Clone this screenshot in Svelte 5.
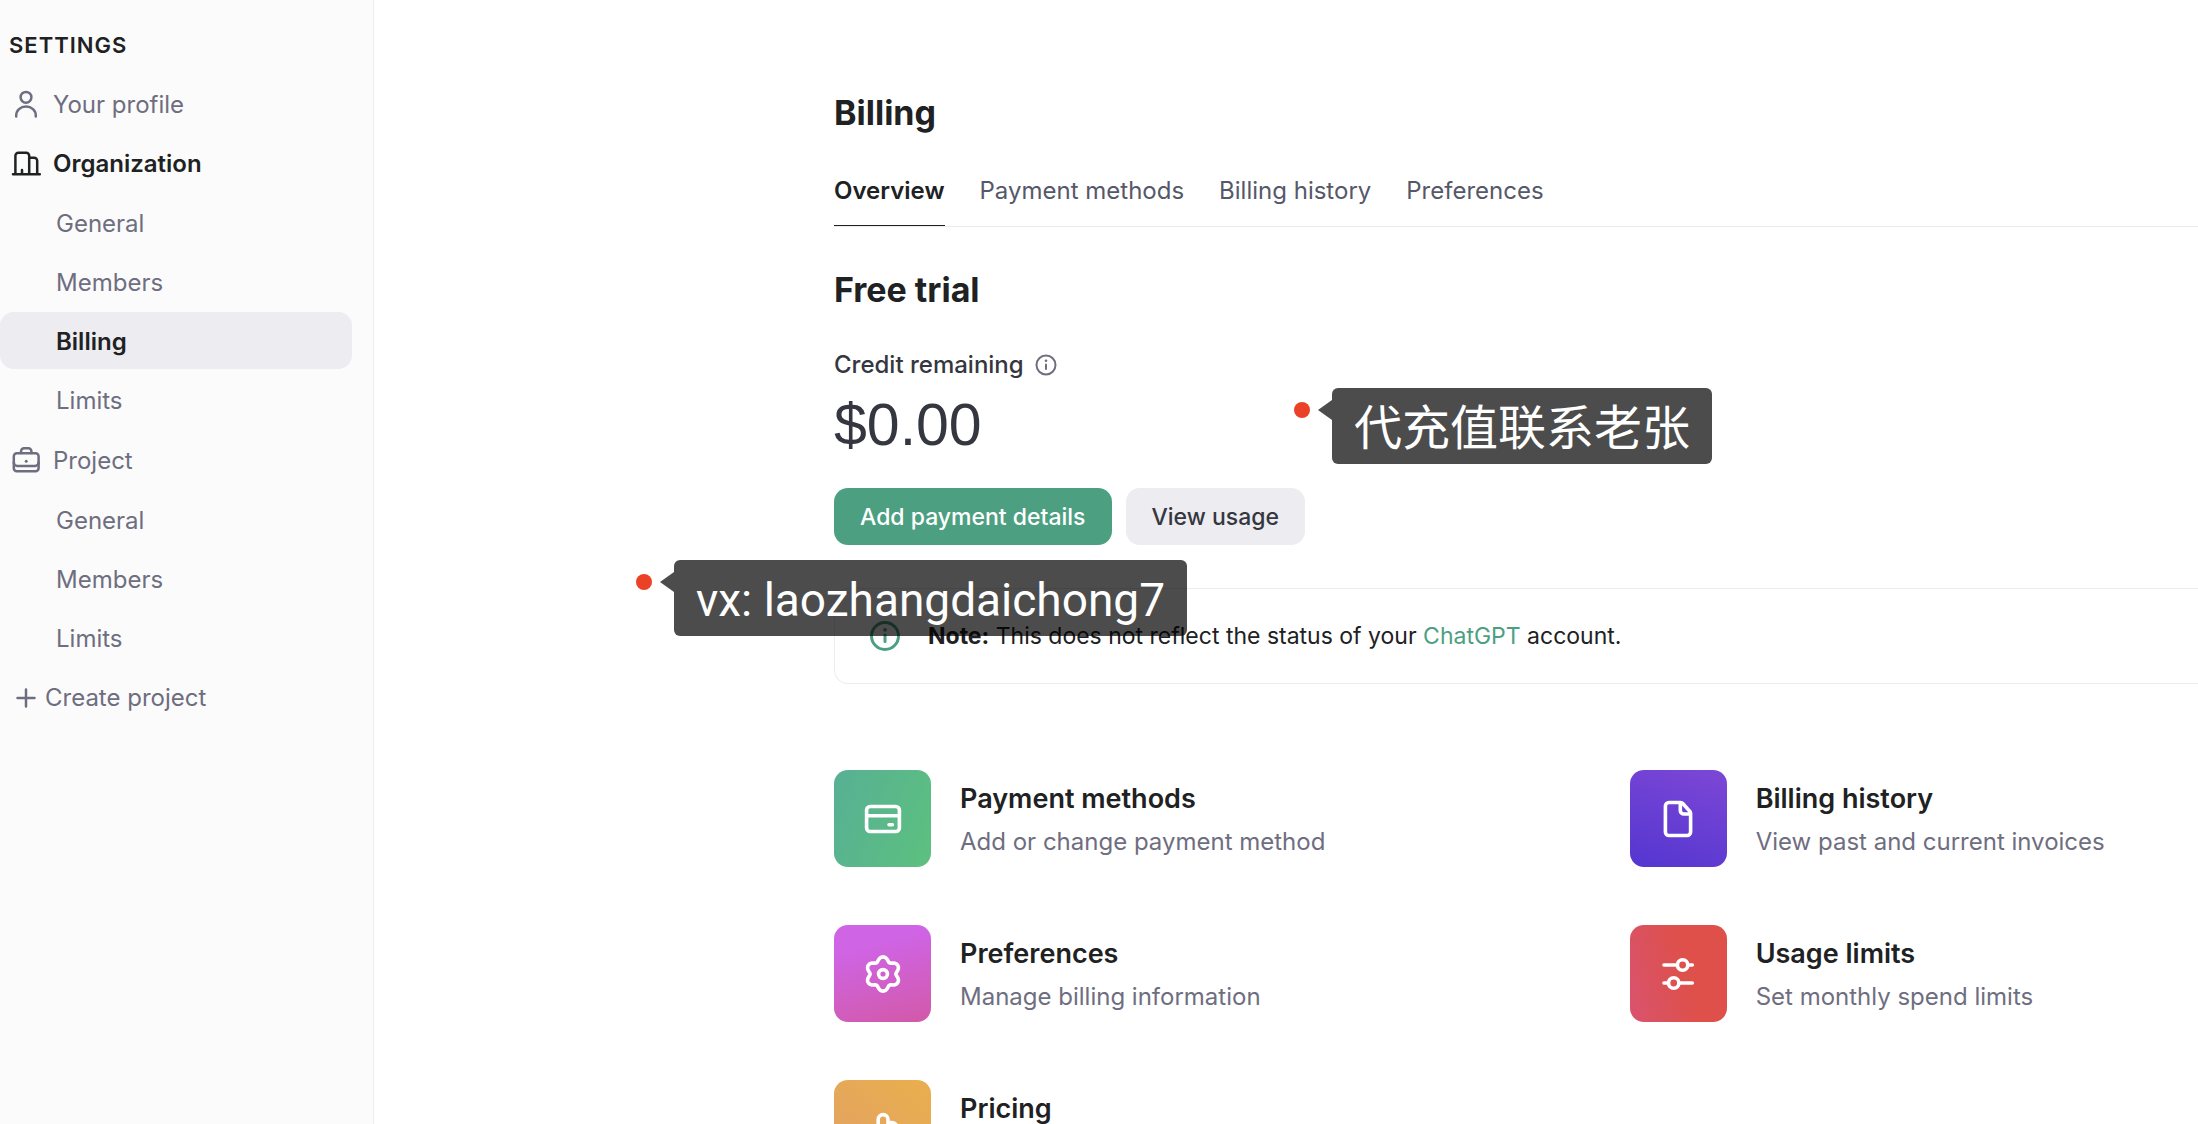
<script>
  const orgLinks = ['General', 'Members', 'Billing', 'Limits'];
  const projectLinks = ['General', 'Members', 'Limits'];
  const tabs = ['Overview', 'Payment methods', 'Billing history', 'Preferences'];
  const cards = [
    { id: 'card', title: 'Payment methods', text: 'Add or change payment method' },
    { id: 'file', title: 'Billing history', text: 'View past and current invoices' },
    { id: 'gear', title: 'Preferences', text: 'Manage billing information' },
    { id: 'sliders', title: 'Usage limits', text: 'Set monthly spend limits' },
    { id: 'hand', title: 'Pricing', text: '' }
  ];

  // Six-lobed gear outline around (24, 24)
  const gear =
    'M' +
    Array.from({ length: 120 }, (_, i) => {
      const a = (i / 120) * Math.PI * 2;
      const r = 15.2 + 2.1 * Math.cos(6 * a) - 0.2 * Math.cos(12 * a);
      return `${(24 + r * Math.sin(a)).toFixed(2)} ${(24 - r * Math.cos(a)).toFixed(2)}`;
    }).join('L') +
    'Z';
</script>

<div class="app">
  <nav class="sidebar" aria-label="Settings">
    <h2>SETTINGS</h2>
    <a class="row" href="#profile">
      <svg class="icon" viewBox="0 0 32 32"><circle cx="16" cy="8.3" r="5.4" /><path d="M6.2 27.4v-.6c0-5.4 4.2-9.2 9.8-9.2s9.8 3.8 9.8 9.2v.6" /></svg>
      Your profile
    </a>
    <a class="row active" href="#organization">
      <svg class="icon" viewBox="0 0 32 32"><path d="M3 26.3h26.800M5.400 26V7.700a3 3 0 0 1 3-3h7.800a3 3 0 0 1 3 3V26M19.200 9.700h5a3 3 0 0 1 3 3V26M12 22v3.500" /></svg>
      Organization
    </a>
    <div class="sub">
      {#each orgLinks as link}
        <a class="row child" class:active={link === 'Billing'} class:current={link === 'Billing'} href="#org-{link}">{link}</a>
      {/each}
    </div>
    <a class="row" href="#project">
      <svg class="icon" viewBox="0 0 32 32"><rect x="3.800" y="8.200" width="24.800" height="18" rx="3" /><path d="M11 8V6.200a3 3 0 0 1 3-3h4.400a3 3 0 0 1 3 3V8M3.800 17.500a3.500 3.500 0 0 0 3.500 3.500h17.800a3.500 3.500 0 0 0 3.500-3.500" /><circle class="dot-fill" cx="16.200" cy="16.300" r="1.500" /></svg>
      Project
    </a>
    <div class="sub">
      {#each projectLinks as link}
        <a class="row child" href="#project-{link}">{link}</a>
      {/each}
    </div>
    <button class="row create">
      <svg class="icon" viewBox="0 0 32 32"><path d="M16 7.500v17M7.500 16h17" /></svg>
      Create project
    </button>
  </nav>

  <main>
    <h1>Billing</h1>
    <div class="tabs">
      {#each tabs as tab, i}
        <a class="tab" class:selected={i === 0} href="#tab-{i}">{tab}</a>
      {/each}
    </div>

    <h1 class="plan">Free trial</h1>
    <div class="credit">
      Credit remaining
      <svg viewBox="0 0 22 22"><circle cx="11" cy="11" r="9.500" /><path d="M11 10.500v4.500" /><circle class="dot-fill" cx="11" cy="6.800" r="1.300" /></svg>
    </div>
    <div class="amount">$0.00</div>
    <div class="actions">
      <button class="btn primary">Add payment details</button>
      <button class="btn">View usage</button>
    </div>

    <div class="note">
      <svg viewBox="0 0 32 32"><circle cx="16" cy="16" r="13.500" /><path d="M16 15v6.500" /><circle class="dot-fill" cx="16" cy="9.800" r="1.900" /></svg>
      <p><strong>Note:</strong> This does not reflect the status of your <a href="#chatgpt">ChatGPT</a> account.</p>
    </div>

    <div class="cards">
      {#each cards as card}
        <a class="card" href="#{card.id}">
          <span class="tile tile-{card.id}">
            <svg viewBox="0 0 48 48">
              {#if card.id === 'card'}
                <rect x="7.600" y="11.500" width="32.800" height="25" rx="3.600" /><path d="M8 20.700h32M30 29.700h3.400" />
              {:else if card.id === 'file'}
                <path d="M26.500 7.500H15a3.600 3.600 0 0 0-3.600 3.600v25.800a3.600 3.600 0 0 0 3.600 3.600h18a3.600 3.600 0 0 0 3.600-3.600V18.600a3.600 3.600 0 0 0-1-2.500l-6.600-7.400a3.600 3.600 0 0 0-2.500-1.200zM26.300 8v7.400a3.600 3.600 0 0 0 3.600 3.600h6.500" />
              {:else if card.id === 'gear'}
                <path d={gear} /><circle cx="24" cy="24" r="4.400" />
              {:else if card.id === 'sliders'}
                <path d="M10 15h13.400M33.800 15h4.500M10 33h4.500M25 33h13.300" /><circle cx="28.600" cy="15" r="5.200" /><circle cx="19.700" cy="33" r="5.200" />
              {:else}
                <path d="M19.200 29V14.500a4.900 4.900 0 0 1 9.800 0V25M29 17.500h4a4.900 4.900 0 0 1 4.900 4.900V32a9 9 0 0 1-9 9h-5a9 9 0 0 1-7.500-4L11 29" />
              {/if}
            </svg>
          </span>
          <span class="label">
            <strong>{card.title}</strong>
            {#if card.text}<span>{card.text}</span>{/if}
          </span>
        </a>
      {/each}
    </div>
  </main>

  <div class="pin pin-top"><i></i><span>代充值联系老张</span></div>
  <div class="pin pin-bottom"><i></i><span>vx: laozhangdaichong7</span></div>
</div>

<style>
  :global(body) {
    background: #fff;
    font-family: Inter, "Liberation Sans", "Noto Sans CJK SC", sans-serif;
  }
  .app {
    position: relative;
    display: flex;
    height: 100vh;
    overflow: hidden;
    color: #202123;
    font-size: 24px;
    line-height: 32px;
  }
  a { color: inherit; text-decoration: none; }
  button { font: inherit; border: 0; cursor: pointer; }
  svg {
    fill: none;
    stroke: currentColor;
    stroke-linecap: round;
    stroke-linejoin: round;
    flex: none;
  }
  .dot-fill { fill: currentColor; stroke: none; }

  .sidebar {
    box-sizing: border-box;
    flex: none;
    width: 374px;
    display: flex;
    flex-direction: column;
    gap: 2px;
    padding: 29px 21px 0 0;
    background: #fbfbfb;
    border-right: 1px solid #ececf1;
  }
  h2 {
    margin: 0 0 12px;
    padding-left: 9px;
    font-size: 22px;
    font-weight: 600;
    letter-spacing: 1px;
  }
  .row {
    box-sizing: border-box;
    height: 57px;
    display: flex;
    align-items: center;
    gap: 11px;
    padding: 2px 10px 0;
    border-radius: 14px;
    background: none;
    color: #6e6e80;
  }
  .child { padding-left: 56px; }
  .create { gap: 3px; padding-top: 0; }
  .active { color: #202123; font-weight: 600; }
  .current { background: #ececf1; }
  .sub {
    display: flex;
    flex-direction: column;
    gap: 2px;
    padding: 1px 0;
  }
  .icon { width: 32px; height: 32px; stroke-width: 2.500; }

  main {
    flex: 1;
    min-width: 0;
    padding: 89px 0 0 460px;
  }
  h1 {
    margin: 0;
    font-size: 34px;
    line-height: 48px;
    font-weight: 700;
  }
  .tabs {
    display: flex;
    gap: 35px;
    margin-top: 31px;
    border-bottom: 1px solid #ececec;
  }
  .tab {
    padding: 7px 0 18px;
    color: #565869;
    border-bottom: 1px solid transparent;
  }
  .selected {
    color: #202123;
    font-weight: 600;
    border-color: #202123;
  }
  .plan { margin-top: 39px; }
  .credit {
    display: flex;
    align-items: center;
    gap: 11px;
    margin-top: 35px;
    color: #353740;
    font-weight: 500;
  }
  .credit svg { width: 22px; height: 22px; stroke-width: 2; color: #6e6e80; }
  .amount {
    margin-top: 12px;
    color: #353740;
    font-family: "Liberation Sans", sans-serif;
    font-size: 59px;
    line-height: 64px;
  }
  .actions { display: flex; gap: 14px; margin-top: 31px; }
  .btn {
    height: 57px;
    padding: 0 26px;
    border-radius: 14px;
    background: #ececf1;
    color: #353740;
    font-size: 23px;
    font-weight: 500;
  }
  .primary { background: #4ca081; color: #fff; }
  .note {
    display: flex;
    align-items: center;
    gap: 27px;
    margin-top: 43px;
    padding: 31px 34px;
    border: 1px solid #ececec;
    border-right: 0;
    border-radius: 14px 0 0 14px;
  }
  .note svg { width: 32px; height: 32px; stroke-width: 3; color: #4ca081; }
  .note p { margin: 0; font-size: 23px; }
  .note a { color: #4ca081; }

  .cards {
    display: grid;
    grid-template-columns: 7fr 5fr;
    row-gap: 58px;
    margin-top: 86px;
  }
  .card { display: flex; gap: 29px; }
  .tile {
    display: grid;
    place-items: center;
    width: 97px;
    height: 97px;
    border-radius: 14px;
    color: #fff;
  }
  .tile svg { width: 48px; height: 48px; stroke-width: 3.600; }
  .tile-card { background: linear-gradient(110deg, #57b094, #5dc07f); }
  .tile-file { background: linear-gradient(20deg, #5436d0, #7d47d6); }
  .tile-gear { background: linear-gradient(165deg, #cf64e4 25%, #d259a8); }
  .tile-sliders { background: linear-gradient(75deg, #d9536e, #de5049 60%); }
  .tile-hand { background: linear-gradient(40deg, #e2a066, #e9af4d); }
  .label {
    display: flex;
    flex-direction: column;
    gap: 11px;
    padding-top: 13px;
    color: #6e6e80;
  }
  .label strong { color: #202123; font-size: 27px; font-weight: 600; }

  .pin {
    position: absolute;
    display: flex;
    color: #fff;
    line-height: 72px;
  }
  .pin-top { left: 1294px; top: 388px; font-size: 48px; }
  .pin-bottom { left: 636px; top: 560px; font-family: Roboto, sans-serif; font-size: 46px; }
  .pin i {
    width: 16px;
    height: 16px;
    margin: 14px 22px 0 0;
    border-radius: 50%;
    background: #eb4127;
  }
  .pin span {
    padding: 4px 22px 0;
    background: rgba(0, 0, 0, 0.7);
    border-radius: 6px;
  }
  .pin span::before {
    content: "";
    position: absolute;
    left: 24px;
    top: 12px;
    width: 14px;
    height: 20px;
    background: rgba(0, 0, 0, 0.7);
    clip-path: polygon(0 50%, 100% 0, 100% 100%);
  }
</style>
